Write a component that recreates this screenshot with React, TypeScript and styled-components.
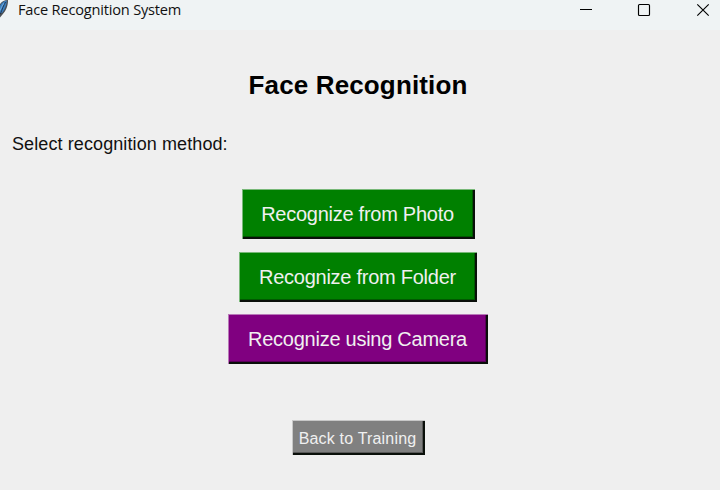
import React from "react";
import styled, { createGlobalStyle } from "styled-components";

const GlobalStyle = createGlobalStyle`
  html, body { margin: 0; padding: 0; background: #efefef; }
  *, *::before, *::after { box-sizing: border-box; }
`;

const Window = styled.div`
  width: 720px;
  height: 490px;
  overflow: hidden;
  display: flex;
  flex-direction: column;
  background: #efefef;
  font-family: "Liberation Sans", Arial, sans-serif;
`;

const TitleBar = styled.header`
  height: 30px;
  flex: none;
  display: flex;
  align-items: flex-start;
  background: #eff3f4;
`;

const FeatherIcon = styled.svg`
  display: block;
  width: 18px;
  height: 20px;
  flex: none;
`;

const WindowTitle = styled.div`
  flex: 1;
  color: #111;
  font: 14.6px/18px "Open Sans", "Noto Sans", sans-serif;
  letter-spacing: -0.2px;
  white-space: nowrap;
`;

const WindowControls = styled.svg`
  display: block;
  width: 144px;
  height: 20px;
  flex: none;
`;

const Content = styled.main`
  flex: 1;
  display: flex;
  flex-direction: column;
  align-items: center;
`;

const Heading = styled.h1`
  margin: 40px 4px 0 0;
  font-size: 26px;
  line-height: 30px;
  font-weight: 700;
  letter-spacing: 0.14px;
  color: #000;
  white-space: nowrap;
`;

const Prompt = styled.p`
  align-self: flex-start;
  margin: 33px 0 0 12px;
  font-size: 18px;
  line-height: 22px;
  letter-spacing: 0.1px;
  color: #111;
  white-space: nowrap;
`;

const Methods = styled.div`
  display: flex;
  flex-direction: column;
  align-items: center;
  gap: 12.5px;
  margin: 34px 4px 0 0;
`;

const MethodButton = styled.button<{ $color: string; $light: string; $width: number }>`
  width: ${(p) => p.$width}px;
  height: 50px;
  padding: 0 1px 0 0;
  border: 0;
  background: ${(p) => p.$color};
  box-shadow: inset 1px 1px ${(p) => p.$light}, inset -2px -2px #0a0f0a,
    inset -3px -3px rgba(0, 0, 0, 0.3);
  color: #f0f0f0;
  font-family: inherit;
  font-size: 20px;
  line-height: 24px;
  letter-spacing: -0.26px;
  white-space: nowrap;
`;

const BackButton = styled(MethodButton)`
  height: 35px;
  margin: 56px 4px 0 0;
  padding-top: 3px;
  font-size: 16px;
  letter-spacing: 0.18px;
`;

export default function App() {
  return (
    <Window>
      <GlobalStyle />
      <TitleBar>
        <FeatherIcon viewBox="0 0 18 20" aria-hidden="true">
          <path d="M0 17.5V4C2 1.5 4.5 0 8 0C8.2 5.5 6 11 2.5 14.5Z" fill="#4a4f55" />
          <path d="M0 13V5.5C2 2.5 4 .8 6.8 .5C6.6 5.5 4.8 9.5 2 13Z" fill="#3a7fc0" />
          <path d="M5.6 2C3.5 5.5 2.2 9 .4 14" stroke="#1c3048" strokeWidth=".9" fill="none" />
          <path d="M3.8 3.2C2.2 5.5 1 8 0 10.5" stroke="#79b0df" strokeWidth=".9" fill="none" />
        </FeatherIcon>
        <WindowTitle>Face Recognition System</WindowTitle>
        <WindowControls viewBox="0 0 144 20" fill="none" stroke="#000" aria-hidden="true">
          <path d="M4 9.5H16" />
          <rect x="62.5" y="4.5" width="11" height="11" rx="1" strokeWidth="1.15" />
          <path d="M121.3 4.3L132.7 15.7M132.7 4.3L121.3 15.7" strokeWidth="1.15" />
        </WindowControls>
      </TitleBar>
      <Content>
        <Heading>Face Recognition</Heading>
        <Prompt>Select recognition method:</Prompt>
        <Methods>
          <MethodButton $color="#008000" $light="#78b878" $width={233}>Recognize from Photo</MethodButton>
          <MethodButton $color="#008000" $light="#78b878" $width={238}>Recognize from Folder</MethodButton>
          <MethodButton $color="#800080" $light="#b878b8" $width={260}>Recognize using Camera</MethodButton>
        </Methods>
        <BackButton $color="#808080" $light="#c8c8c8" $width={133}>Back to Training</BackButton>
      </Content>
    </Window>
  );
}
